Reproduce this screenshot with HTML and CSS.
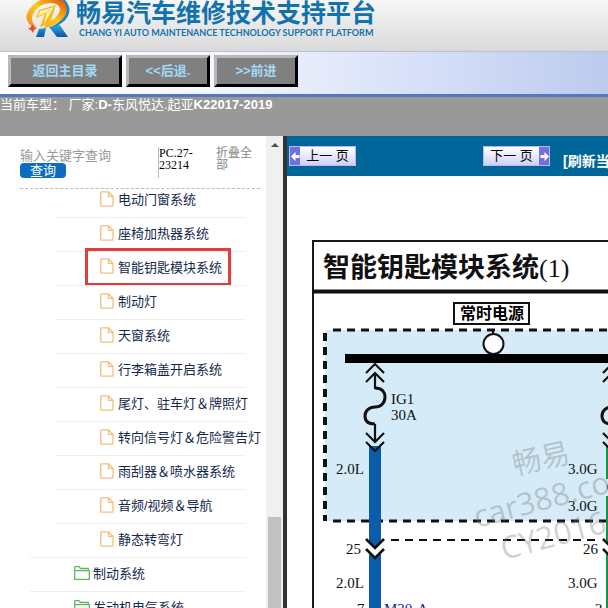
FILE: index.html
```html
<!DOCTYPE html>
<html lang="zh-CN">
<head>
    <meta charset="UTF-8">
    <meta name="viewport" content="width=device-width, initial-scale=1.0">
    <title>畅易汽车维修技术支持平台</title>
    <link rel="stylesheet" href="styles.css">
</head>
<body>

    <!-- Icons used in the tree -->
    <svg class="icon-defs" width="0" height="0">
        <symbol id="icon-file" viewBox="0 0 14 16">
            <path d="M1.5 .8H8.500L13 5.300V14.200Q13 15.200 12 15.200H1.800Q.8 15.200 .8 14.200V1.500Q.8 .8 1.500 .8ZM8.500 .8V5.300H13" fill="none" stroke="#f5bd7c" stroke-width="1.300"/>
        </symbol>
        <symbol id="icon-folder" viewBox="0 0 16 14">
            <path d="M.7 13.300V1.300Q.7 .7 1.300 .7H5L6.500 2.500H14.300V4.500M.7 4.600H15.300V13.300H.7Z" fill="none" stroke="#5cb860" stroke-width="1.300"/>
        </symbol>
    </svg>

    <header class="site-header">
        <svg class="logo" width="46" height="38" viewBox="0 0 46 38">
            <defs>
                <linearGradient id="ring" x1="0" y1="1" x2="1" y2="0">
                    <stop offset="0" stop-color="#f08a1c"/>
                    <stop offset=".5" stop-color="#ffc91a"/>
                    <stop offset="1" stop-color="#e2430f"/>
                </linearGradient>
                <linearGradient id="leg" x1="0" y1="0" x2="0" y2="1">
                    <stop offset="0" stop-color="#2bb3e8"/>
                    <stop offset="1" stop-color="#0c56a8"/>
                </linearGradient>
            </defs>
            <path d="M14 29L21 28L19 37H11ZM24 27L34 24L43 37H32Z" fill="url(#leg)"/>
            <path d="M40 0Q47 8 43 16Q39 24 27 27Q38 20 41 12Q42 6 37 0Z" fill="#1785c8"/>
            <path d="M9 28Q-3 20 4 10Q10 0 24 -2Q38 -3 41 5Q44 15 34 22Q28 26 19 28L22 23Q33 18 35 10Q35 3 25 3Q13 4 8 14Q5 21 11 27Z" fill="url(#ring)"/>
            <path d="M14 10L31 5L26 20Q23 25 15 27L20 14L11 18Z" fill="#f9b91c"/>
            <path d="M15 11L29 7L19 24L22 12L13 16Z" fill="#fff3a8"/>
            <path d="M7 24L9 27L12 28L9 30L8 33L6 30L3 29L6 27Z" fill="#e0502a"/>
        </svg>
        <div class="brand">
            <div class="brand-name">畅易汽车维修技术支持平台</div>
            <div class="brand-sub">CHANG YI AUTO MAINTENANCE TECHNOLOGY SUPPORT PLATFORM</div>
        </div>
    </header>

    <nav class="toolbar">
        <button type="button" class="tool-btn tool-btn-wide">返回主目录</button>
        <button type="button" class="tool-btn">&lt;&lt;后退.</button>
        <button type="button" class="tool-btn">&gt;&gt;前进</button>
    </nav>

    <div class="car-bar">当前车型： 厂家:<b>D-</b>东风悦达.起亚<b>K22017-2019</b></div>

    <div class="content">
        <aside class="sidebar">
            <div class="sidebar-main">
                <form class="search">
                    <div class="search-field">
                        <input type="text" class="search-input" aria-label="输入关键字查询" placeholder="输入关键字查询">
                        <button type="button" class="search-btn">查询</button>
                    </div>
                    <div class="search-code">PC.27-23214</div>
                    <a href="#" class="fold-link">折叠全部</a>
                </form>

                <ul class="tree">
                    <li>
                        <ul class="tree-sub">
                            <li><a href="#"><svg class="icon-file"><use href="#icon-file"/></svg>电动门窗系统</a></li>
                            <li><a href="#"><svg class="icon-file"><use href="#icon-file"/></svg>座椅加热器系统</a></li>
                            <li class="selected"><a href="#"><svg class="icon-file"><use href="#icon-file"/></svg>智能钥匙模块系统</a></li>
                            <li><a href="#"><svg class="icon-file"><use href="#icon-file"/></svg>制动灯</a></li>
                            <li><a href="#"><svg class="icon-file"><use href="#icon-file"/></svg>天窗系统</a></li>
                            <li><a href="#"><svg class="icon-file"><use href="#icon-file"/></svg>行李箱盖开启系统</a></li>
                            <li><a href="#"><svg class="icon-file"><use href="#icon-file"/></svg>尾灯、驻车灯＆牌照灯</a></li>
                            <li><a href="#"><svg class="icon-file"><use href="#icon-file"/></svg>转向信号灯＆危险警告灯</a></li>
                            <li><a href="#"><svg class="icon-file"><use href="#icon-file"/></svg>雨刮器＆喷水器系统</a></li>
                            <li><a href="#"><svg class="icon-file"><use href="#icon-file"/></svg>音频/视频＆导航</a></li>
                            <li><a href="#"><svg class="icon-file"><use href="#icon-file"/></svg>静态转弯灯</a></li>
                        </ul>
                    </li>
                    <li class="folder"><a href="#"><svg class="icon-folder"><use href="#icon-folder"/></svg>制动系统</a></li>
                    <li class="folder"><a href="#"><svg class="icon-folder"><use href="#icon-folder"/></svg>发动机电气系统</a></li>
                </ul>
            </div>
            <div class="scrollbar">
                <div class="scroll-arrow"></div>
                <div class="scroll-thumb"></div>
            </div>
        </aside>

        <main class="viewer">
            <div class="pager">
                <button type="button" class="page-btn"><span class="page-arrow"><svg width="9" height="9" viewBox="0 0 9 9"><path d="M0 4.500L4.500 0V3H8.500V6H4.500V9Z" fill="#fff"/></svg></span><span class="page-label">上一 页</span></button>
                <button type="button" class="page-btn page-next"><span class="page-label">下一 页</span><span class="page-arrow"><svg width="9" height="9" viewBox="0 0 9 9"><path d="M9 4.500L4.500 0V3H.5V6H4.500V9Z" fill="#fff"/></svg></span></button>
                <a href="#" class="refresh">[刷新当前页]</a>
            </div>

            <!-- Wiring diagram -->
            <div class="diagram">
                <svg width="640" height="480" viewBox="0 0 640 480">
                    <defs>
                        <g id="fuse" fill="none" stroke="#111" stroke-width="2.200">
                            <path d="M-9 9L0 0L9 9M-9 18L0 9L9 18M0 9V25"/>
                            <path d="M0 24C7 24 10 28 10 33C10 39 6 43 0 43C-6 43 -10 47 -10 52C-10 57 -7 60 0 60" stroke-width="3"/>
                            <path d="M0 60V77M-9 69L0 78L9 69M-9 78L0 87L9 78"/>
                        </g>
                        <g id="plug">
                            <path d="M-9 1L0 10L9 1V10L0 19L-9 10Z" fill="#fff"/>
                            <path d="M-9 0L0 9L9 0M-9 10L0 19L9 10" fill="none" stroke="#111" stroke-width="2.600"/>
                        </g>
                    </defs>

                    <!-- frame and title -->
                    <path d="M26 480V65H640" fill="none" stroke="#1a1a1a" stroke-width="2"/>
                    <path d="M25 115.500H640" stroke="#111" stroke-width="4"/>
                    <text x="36" y="101" class="dg-title">智能钥匙模块系统<tspan class="dg-number">(1)</tspan></text>

                    <!-- fuse box -->
                    <rect x="38" y="154" width="602" height="191" fill="#d5ebf8"/>
                    <path d="M46 154H640M46 345H640" stroke="#111" stroke-width="3" stroke-dasharray="8 6"/>
                    <path d="M38 157V345" stroke="#111" stroke-width="4" stroke-dasharray="8 6"/>
                    <rect x="167" y="127" width="75" height="21" fill="#fff" stroke="#111" stroke-width="2"/>
                    <text x="173" y="143" class="dg-label">常时电源</text>
                    <path d="M206 154V159" stroke="#111" stroke-width="2"/>
                    <path d="M58 182.500H640" stroke="#000" stroke-width="9"/>
                    <circle cx="206.500" cy="168" r="10" fill="#fff" stroke="#111" stroke-width="2"/>

                    <!-- wires -->
                    <path d="M88 270V480" stroke="#0b5cab" stroke-width="12"/>
                    <path d="M325 270V303M325 320V480" stroke="#129447" stroke-width="12"/>
                    <circle cx="325" cy="311" r="5" fill="#444"/>
                    <use href="#fuse" x="88" y="188"/>
                    <use href="#fuse" x="325" y="188"/>
                    <path d="M104 364H312" stroke="#111" stroke-width="2" stroke-dasharray="8 6"/>
                    <use href="#plug" x="88" y="363"/>
                    <use href="#plug" x="325" y="363"/>

                    <g class="dg-mark">
                        <text transform="translate(228 299) rotate(-13)">畅易</text>
                        <text transform="translate(190 352) rotate(-15)" class="dg-mark-large">car388.com</text>
                        <text transform="translate(217 384) rotate(-15)" class="dg-mark-large">CY2016</text>
                    </g>

                    <g class="dg-text">
                        <text x="104" y="228">IG1</text>
                        <text x="104" y="244">30A</text>
                        <text x="49" y="298">2.0L</text>
                        <text x="281" y="298">3.0G</text>
                        <text x="281" y="335">3.0G</text>
                        <text x="59" y="378">25</text>
                        <text x="296" y="378">26</text>
                        <text x="49" y="412">2.0L</text>
                        <text x="281" y="412">3.0G</text>
                        <text x="70" y="438">7</text>
                        <text x="308" y="438">2</text>
                        <text x="97" y="438" class="dg-link">M30-A</text>
                    </g>
                </svg>
            </div>
        </main>
    </div>

</body>
</html>
```
FILE: styles.css
```css
* {
    box-sizing: border-box;
}
body {
    margin: 0;
    height: 100vh;
    display: flex;
    flex-direction: column;
    overflow: hidden;
    background: #fff;
    font-family: "Liberation Sans", "Noto Sans CJK SC", sans-serif;
    font-size: 13px;
}
a {
    text-decoration: none;
}
ul {
    list-style: none;
    margin: 0;
    padding: 0;
}
.icon-defs {
    position: absolute;
}

/* Header */
.site-header {
    display: flex;
    flex: none;
    height: 51px;
    padding-left: 25px;
    gap: 5px;
    background: linear-gradient(#f7f7f7, #d9d9d9);
}
.logo {
    flex: none;
}
.brand {
    color: #1272ae;
    font-weight: bold;
    white-space: nowrap;
}
.brand-name {
    font-family: "Noto Sans CJK SC", sans-serif;
    font-size: 25px;
    line-height: 22px;
}
.brand-sub {
    padding: 5px 0 0 3px;
    font-family: Lato, sans-serif;
    font-size: 9px;
    line-height: 12px;
}

/* Toolbar */
.toolbar {
    display: flex;
    flex: none;
    gap: 4px;
    padding: 3px 8px 7px;
    border-top: 1px solid #b9c0d8;
    border-bottom: 3px solid #5876c0;
    background: linear-gradient(90deg, #fff, #f4f6fd 35%, #d6dff8 70%, #bccaed);
}
.tool-btn {
    width: 84px;
    height: 32px;
    padding: 0 0 4px;
    border: 3px solid;
    border-color: #b8b8b8 #000 #000 #b8b8b8;
    background: #808080;
    color: #a3d9f5;
    font-family: inherit;
    font-size: 13px;
    font-weight: bold;
    cursor: pointer;
}
.tool-btn-wide {
    width: 114px;
}

.car-bar {
    flex: none;
    height: 39px;
    background: #999;
    color: #fff;
    line-height: 15px;
}

.content {
    display: flex;
    flex: 1;
    min-height: 0;
}

/* Sidebar */
.sidebar {
    display: flex;
    flex: none;
    width: 287px;
    border-right: 4px solid #333;
    overflow: hidden;
}
.sidebar-main {
    flex: 1;
    min-width: 0;
    overflow: hidden;
}
.search {
    display: flex;
    height: 53px;
    margin: 0 6px 0 20px;
    padding-top: 11px;
    border-bottom: 1px dashed #b5bcc4;
}
.search-field {
    width: 138px;
}
.search-input {
    display: block;
    width: 120px;
    height: 16px;
    padding: 0;
    border: none;
    background: none;
    font-family: inherit;
    font-size: 13px;
}
.search-input::placeholder {
    color: #999;
}
.search-btn {
    display: block;
    width: 46px;
    height: 15px;
    padding: 0;
    border: none;
    border-radius: 4px;
    background: #0c6cbe;
    color: #fff;
    font-family: inherit;
    font-size: 13px;
    line-height: 14px;
}
.search-code {
    width: 58px;
    height: 31px;
    padding-right: 16px;
    border-left: 1px solid #bbb;
    font-family: "Liberation Serif", serif;
    font-size: 12px;
    line-height: 12px;
}
.fold-link {
    width: 38px;
    color: #888;
    font-size: 12px;
    line-height: 12px;
}

/* Tree */
.tree {
    margin: -6px 20px 0 30px;
}
.tree-sub {
    margin-left: 25px;
}
.tree-sub li,
.folder {
    height: 34px;
    border-top: 1px solid #eee;
}
.tree-sub li:first-child {
    border-top-color: transparent;
}
.tree a {
    display: flex;
    align-items: center;
    height: 29px;
    color: #14284b;
    white-space: nowrap;
}
.tree-sub a {
    padding-left: 45px;
    gap: 4px;
}
.folder a {
    padding-left: 44px;
    gap: 3px;
}
.tree-sub .selected a {
    width: 146px;
    height: 38px;
    margin: -4px 0 0 30px;
    padding: 0 0 2px 12px;
    border: 3px solid #e23c3c;
}
.icon-file {
    flex: none;
    width: 14px;
    height: 16px;
}
.icon-folder {
    flex: none;
    width: 16px;
    height: 14px;
}

/* Scrollbar */
.scrollbar {
    display: flex;
    flex-direction: column;
    justify-content: space-between;
    align-items: center;
    flex: none;
    width: 17px;
    padding-top: 7px;
    background: #f0f0f0;
}
.scroll-arrow {
    border: 4px solid transparent;
    border-top: 0;
    border-bottom: 4px solid #505050;
}
.scroll-thumb {
    width: 13px;
    height: 91px;
    background: #c1c1c1;
}

/* Viewer */
.viewer {
    flex: 1;
    min-width: 0;
    overflow: hidden;
}
.pager {
    display: flex;
    align-items: flex-start;
    height: 40px;
    padding: 10px 0 0 2px;
    background: #069;
    white-space: nowrap;
    overflow: hidden;
}
.page-btn {
    display: flex;
    flex: none;
    width: 67px;
    height: 20px;
    padding: 0;
    border: 1px solid #b9b9ee;
    background: linear-gradient(#fff, #d0d0f8);
    color: #000;
    font-family: inherit;
    font-size: 13px;
    line-height: 18px;
}
.page-next {
    margin-left: 127px;
}
.page-arrow {
    display: flex;
    flex: none;
    align-items: center;
    justify-content: center;
    width: 10px;
    height: 18px;
    background: #7070e0;
}
.page-label {
    flex: 1;
    text-align: center;
}
.refresh {
    padding: 6px 0 0 13px;
    color: #fff;
    font-size: 14px;
    font-weight: bold;
    line-height: 18px;
}

/* Diagram */
.diagram svg {
    display: block;
}
.dg-title {
    font-family: "Noto Sans CJK SC", sans-serif;
    font-size: 27px;
    font-weight: bold;
    fill: #111;
}
.dg-number {
    font-family: "Liberation Serif", serif;
    font-size: 26px;
    font-weight: normal;
}
.dg-label {
    font-family: "Noto Sans CJK SC", sans-serif;
    font-size: 16px;
    font-weight: bold;
}
.dg-text {
    font-family: "Liberation Serif", serif;
    font-size: 15px;
    fill: #111;
}
.dg-link {
    fill: #1818c8;
}
.dg-mark {
    font-family: "Open Sans", "Noto Sans CJK SC", sans-serif;
    font-size: 29px;
    fill: #777;
    fill-opacity: .35;
}
.dg-mark-large {
    font-size: 31px;
}
```
